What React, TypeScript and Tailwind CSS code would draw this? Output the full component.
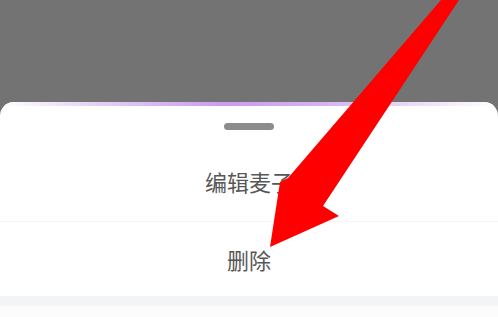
import React from 'react';

const Arrow = () => (
  <svg className="absolute inset-0 pointer-events-none" width="498" height="317" viewBox="0 0 498 317">
    <polygon
      points="441,0 459,0 323,206 339,216 270,247 280,182 288,178"
      fill="#ff0000"
    />
  </svg>
);

const App = () => {
  return (
    <div className="relative w-[498px] h-[317px] overflow-hidden bg-[#737373] flex flex-col font-['Noto_Sans_CJK_SC','Noto_Sans',sans-serif]">
      <div className="h-[102px] shrink-0" />

      {/* bottom sheet */}
      <div className="flex-1 flex flex-col bg-white rounded-t-[14px] overflow-hidden">
        <div className="h-[4px] bg-[linear-gradient(90deg,#ffffff_0%,#e3cff5_20%,#c99cef_45%,#d5b2f2_65%,#f3eafb_90%,#ffffff_100%)]" />
        <div className="flex justify-center pt-[17px]">
          <div className="w-[50px] h-[7px] rounded-full bg-[#8c8c8c]" />
        </div>
        <div className="h-[91px] flex items-center justify-center pt-[11px] text-[22px] text-[#575757]">
          编辑麦子
        </div>
        <div className="h-px bg-[#f4f4f5]" />
        <div className="h-[74px] flex items-center justify-center text-[22px] text-[#575757]">
          删除
        </div>
        <div className="h-[10px] bg-[#f3f4f6]" />
        <div className="flex-1 bg-[#fcfcfc]" />
      </div>

      <Arrow />
    </div>
  );
};

export default App;
